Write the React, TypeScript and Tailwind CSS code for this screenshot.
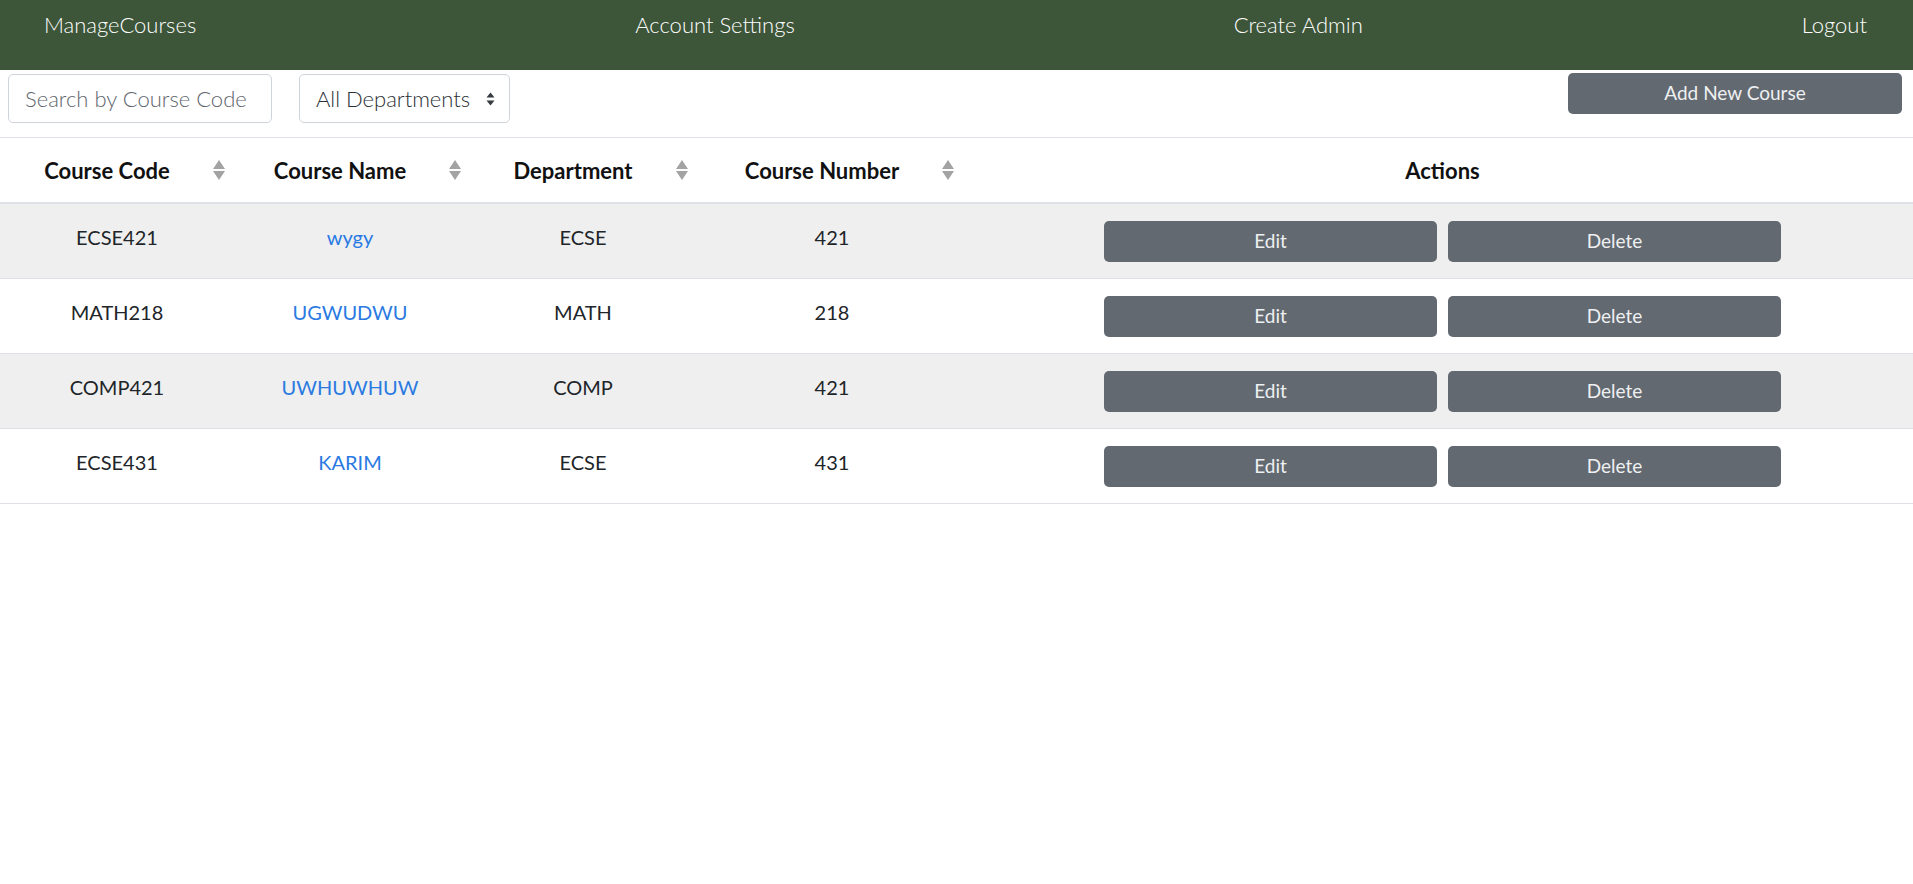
import React from 'react'

interface Course {
  code: string
  name: string
  department: string
  number: number
}

const courses: Course[] = [
  { code: 'ECSE421', name: 'wygy', department: 'ECSE', number: 421 },
  { code: 'MATH218', name: 'UGWUDWU', department: 'MATH', number: 218 },
  { code: 'COMP421', name: 'UWHUWHUW', department: 'COMP', number: 421 },
  { code: 'ECSE431', name: 'KARIM', department: 'ECSE', number: 431 },
]

const cols = 'grid grid-cols-[234px_232px_234px_264px_1fr]'

const SortIcon = () => (
  <svg width="14" height="22" viewBox="0 0 14 22" className="shrink-0">
    <path d="M7 1 L13 10 L1 10 Z" fill="#a3a3a3" />
    <path d="M1 12 L13 12 L7 21 Z" fill="#a3a3a3" />
  </svg>
)

const SortableHeader = ({ label }: { label: string }) => (
  <div className="flex items-center justify-center pl-[36px]">
    <span>{label}</span>
    <span className="ml-[42px]">
      <SortIcon />
    </span>
  </div>
)

const App: React.FC = () => {
  return (
    <div className="min-h-screen bg-white text-[#212529]" style={{ fontFamily: 'Lato, "Open Sans", sans-serif' }}>
      {/* Barre de navigation */}
      <nav className="h-[70px] bg-[#3d5539] flex items-start justify-between pl-[44px] pr-[46px] pt-[8px] text-white text-[22px] font-light">
        <a href="#">ManageCourses</a>
        <a href="#">Account Settings</a>
        <a href="#">Create Admin</a>
        <a href="#">Logout</a>
      </nav>

      {/* Filtres */}
      <div className="flex items-start justify-between h-[68px] border-b border-[#dee2e6] pl-[8px] pr-[11px]">
        <div className="flex items-center gap-[27px] pt-[4px]">
          <input
            type="text"
            placeholder="Search by Course Code"
            className="w-[264px] h-[49px] border border-[#ced4da] rounded-[5px] px-[16px] text-[22px] font-light text-[#495057] placeholder:text-[#5f666d] outline-none"
          />
          <div className="w-[211px] h-[49px] border border-[#ced4da] rounded-[5px] pl-[16px] pr-[14px] flex items-center justify-between text-[22px] font-light text-[#2b3035]">
            <span>All Departments</span>
            <svg width="9" height="14" viewBox="0 0 9 14">
              <path d="M4.5 0.5 L8.5 5.5 L0.5 5.5 Z" fill="#343a40" />
              <path d="M0.5 8.5 L8.5 8.5 L4.5 13.5 Z" fill="#343a40" />
            </svg>
          </div>
        </div>
        <button className="mt-[3px] w-[334px] h-[41px] rounded-[5px] bg-[#626970] text-[#eef0f2] text-[19px]">
          Add New Course
        </button>
      </div>

      {/* Tableau */}
      <div>
        <div className={`${cols} h-[66px] items-center border-b-2 border-[#dee2e6] font-bold text-[22px] text-[#111]`}>
          <SortableHeader label="Course Code" />
          <SortableHeader label="Course Name" />
          <SortableHeader label="Department" />
          <SortableHeader label="Course Number" />
          <div className="text-center pl-[8px]">Actions</div>
        </div>
        {courses.map((c, i) => (
          <div
            key={c.code}
            className={`${cols} h-[75px] items-center border-b border-[#dee2e6] text-[20px] ${i % 2 === 0 ? 'bg-[#efefef]' : 'bg-white'}`}
          >
            <div className="text-center -mt-[8px]">{c.code}</div>
            <div className="text-center -mt-[8px]">
              <a href="#" className="text-[#2a7ae2]">{c.name}</a>
            </div>
            <div className="text-center -mt-[8px]">{c.department}</div>
            <div className="text-center -mt-[8px]">{c.number}</div>
            <div className="flex justify-center gap-[11px] pl-[8px]">
              <button className="w-[333px] h-[41px] rounded-[5px] bg-[#626970] text-[#eef0f2] text-[19px]">
                Edit
              </button>
              <button className="w-[333px] h-[41px] rounded-[5px] bg-[#626970] text-[#eef0f2] text-[19px]">
                Delete
              </button>
            </div>
          </div>
        ))}
      </div>
    </div>
  )
}

export default App
